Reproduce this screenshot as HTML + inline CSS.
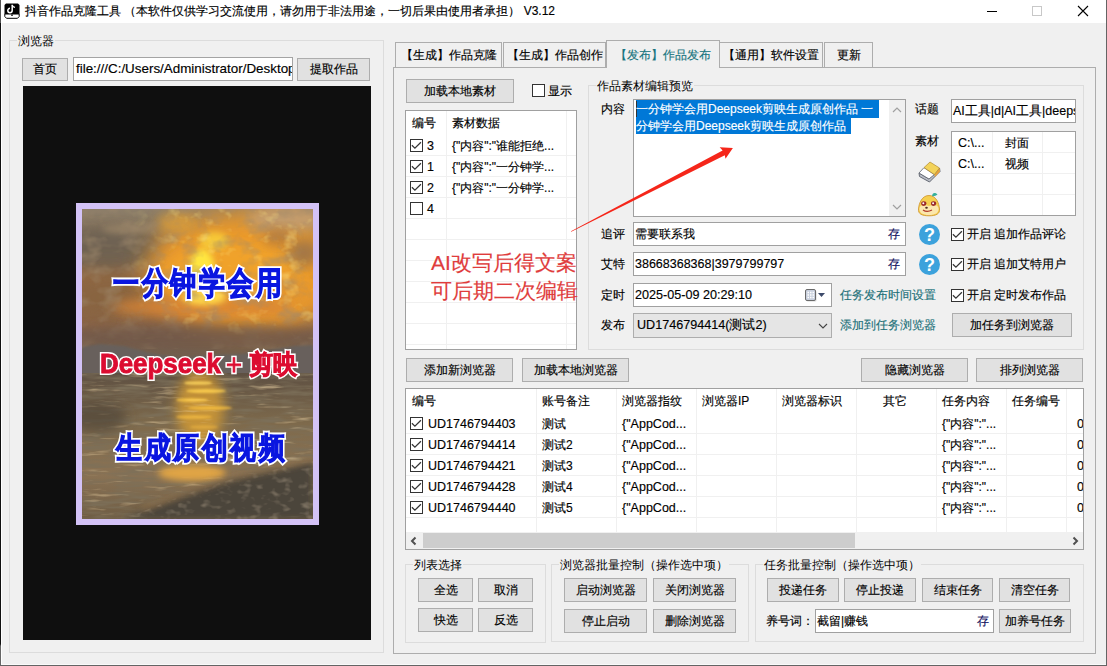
<!DOCTYPE html>
<html><head><meta charset="utf-8">
<style>
*{box-sizing:border-box}
html,body{margin:0;padding:0;width:1107px;height:666px;overflow:hidden;background:#f0f0f0;font-family:"Liberation Sans",sans-serif;font-size:12px;color:#000}
.t,.btn,.tab{-webkit-text-stroke:.15px currentColor}
.a{position:absolute}
.t{position:absolute;white-space:nowrap;line-height:14px}
.btn{position:absolute;background:#e1e1e1;border:1px solid #adadad;text-align:center;white-space:nowrap;line-height:21px;font-size:12px}
.gb{position:absolute;border:1px solid #dcdcdc}
.gbt{position:absolute;background:#f0f0f0;padding:0 1px;white-space:nowrap;line-height:14px;top:-7px}
.inp{position:absolute;background:#fff;border:1px solid #a4a4a4}
.cb{position:absolute;width:13px;height:13px;border:1px solid #333;background:#fff}
.cb svg{position:absolute;left:-1px;top:-1px}
.tab{position:absolute;background:#f0f0f0;border:1px solid #adadad;border-bottom:none;text-align:center;line-height:24px;white-space:nowrap}
.hl{position:absolute;background:#f0f0f0}
.vl{position:absolute;background:#f0f0f0}
.ovw{font-weight:bold;color:#fff;-webkit-text-stroke:4px #fff}
.ovc{font-weight:bold;-webkit-text-stroke:.9px currentColor}
</style></head><body>
<!-- window frame -->
<div class="a" style="left:0;top:0;width:1107px;height:23px;background:#fff"></div>
<div class="a" style="left:1px;top:23px;width:1px;height:642px;background:#fff"></div>
<div class="a" style="left:0;top:664px;width:1107px;height:1px;background:#fafafa"></div>
<div class="a" style="left:0;top:0;width:1px;height:666px;background:linear-gradient(180deg,#555 0,#555 23px,#111 23px,#111 644px,#666 646px)"></div>
<div class="a" style="left:1106px;top:0;width:1px;height:666px;background:#646464"></div>
<div class="a" style="left:0;top:665px;width:1107px;height:1px;background:#646464"></div>
<!-- app icon -->
<svg class="a" style="left:4px;top:3px" width="16" height="16" viewBox="0 0 16 16">
 <path d="M2 0.5H14L15.5 2V11H0.5V2Z" fill="#000"/>
 <path d="M0.8 11H15.2V13.5L13.5 15.3H2.5L0.8 13.5Z" fill="#fff" stroke="#000" stroke-width="1"/>
 <path d="M7.5 13L8 11.5L8.5 13" stroke="#000" stroke-width=".8" fill="none"/>
 <path d="M8.2 1.8V7.5A2.2 2.2 0 1 1 6 5.3" fill="none" stroke="#fff" stroke-width="1.5"/>
 <path d="M8.2 2.2Q9 4 11 4.3" fill="none" stroke="#fff" stroke-width="1.3"/>
</svg>
<div class="t" style="left:25px;top:4px;font-size:12px">抖音作品克隆工具 （本软件仅供学习交流使用，请勿用于非法用途，一切后果由使用者承担） V3.12</div>
<!-- window controls -->
<div class="a" style="left:987px;top:11px;width:10px;height:1px;background:#000"></div>
<div class="a" style="left:1032px;top:6px;width:10px;height:10px;border:1px solid #c8c8c8"></div>
<svg class="a" style="left:1077px;top:5px" width="12" height="12" viewBox="0 0 12 12"><path d="M1 1L11 11M11 1L1 11" stroke="#000" stroke-width="1.1"/></svg>

<!-- left group: browser -->
<div class="gb" style="left:9px;top:40px;width:375px;height:613px"><span class="gbt" style="left:7px">浏览器</span></div>
<div class="btn" style="left:22px;top:58px;width:46px;height:23px">首页</div>
<div class="inp" style="left:73px;top:57px;width:220px;height:24px;overflow:hidden"><span class="t" style="left:2px;top:4px;font-size:13.4px">file:///C:/Users/Administrator/Desktop/index.html</span></div>
<div class="btn" style="left:297px;top:58px;width:73px;height:23px">提取作品</div>
<div class="a" style="left:23px;top:86px;width:348px;height:554px;background:#0f0f0f"></div>
<div class="a" id="photo" style="left:76px;top:203px;width:243px;height:322px;background:#d3c2f6">
 <svg class="a" style="left:6px;top:6px" width="231" height="310" viewBox="0 0 231 310">
  <defs>
   <linearGradient id="sky" x1="0" y1="0" x2="0" y2="1"><stop offset="0" stop-color="#8c7e6a"/><stop offset=".1" stop-color="#85745e"/><stop offset=".35" stop-color="#9a6c44"/><stop offset=".7" stop-color="#8a6448"/><stop offset=".85" stop-color="#74604e"/><stop offset="1" stop-color="#6a5c50"/></linearGradient>
   <linearGradient id="sea" x1="0" y1="0" x2="0" y2="1"><stop offset="0" stop-color="#5e5042"/><stop offset=".35" stop-color="#7e6a4c"/><stop offset=".7" stop-color="#8a7254"/><stop offset="1" stop-color="#6e5c44"/></linearGradient>
   <filter id="b12" x="-50%" y="-50%" width="200%" height="200%"><feGaussianBlur stdDeviation="12"/></filter>
   <filter id="b6" x="-50%" y="-50%" width="200%" height="200%"><feGaussianBlur stdDeviation="6"/></filter>
   <filter id="b3" x="-50%" y="-50%" width="200%" height="200%"><feGaussianBlur stdDeviation="3"/></filter>
   <filter id="b1" x="-50%" y="-50%" width="200%" height="200%"><feGaussianBlur stdDeviation="1.2"/></filter>
   <filter id="ctex" x="0" y="0" width="100%" height="100%"><feTurbulence type="fractalNoise" baseFrequency="0.05 0.07" numOctaves="3" seed="5"/><feColorMatrix type="matrix" values="0 0 0 0 .35  0 0 0 0 .25  0 0 0 0 .15  0 0 0 -2.4 1.3"/></filter>
   <filter id="ctex2" x="0" y="0" width="100%" height="100%"><feTurbulence type="fractalNoise" baseFrequency="0.06 0.08" numOctaves="3" seed="9"/><feColorMatrix type="matrix" values="0 0 0 0 1  0 0 0 0 .82  0 0 0 0 .25  0 0 0 2.6 -1.5"/></filter>
   <filter id="tex" x="0" y="0" width="100%" height="100%"><feTurbulence type="fractalNoise" baseFrequency="0.03 0.22" numOctaves="3" seed="7"/><feColorMatrix type="matrix" values="0 0 0 0 .2  0 0 0 0 .16  0 0 0 0 .1  0 0 0 -2.2 1.35"/></filter>
   <filter id="tex2" x="0" y="0" width="100%" height="100%"><feTurbulence type="fractalNoise" baseFrequency="0.03 0.25" numOctaves="3" seed="3"/><feColorMatrix type="matrix" values="0 0 0 0 .8  0 0 0 0 .62  0 0 0 0 .36  0 0 0 2 -1.2"/></filter>
   <filter id="foam" x="0" y="0" width="100%" height="100%"><feTurbulence type="fractalNoise" baseFrequency="0.1 0.16" numOctaves="2" seed="11"/><feColorMatrix type="matrix" values="0 0 0 0 .62  0 0 0 0 .5  0 0 0 0 .36  0 0 0 1.8 -.95"/></filter>
   <linearGradient id="mg" x1="0" y1="0" x2="1" y2="0"><stop offset=".15" stop-color="#000"/><stop offset=".45" stop-color="#fff"/></linearGradient><mask id="m2"><rect x="0" y="0" width="231" height="140" fill="url(#mg)"/></mask>
   <clipPath id="fc"><path d="M40 310C70 300 100 285 130 276C160 266 190 262 231 252V310Z"/></clipPath>
  </defs>
  <rect x="0" y="0" width="231" height="166" fill="url(#sky)"/>
  <ellipse cx="25" cy="40" rx="58" ry="22" fill="#6a6052" opacity=".85" filter="url(#b6)"/><ellipse cx="28" cy="88" rx="50" ry="25" fill="#86643f" opacity=".8" filter="url(#b12)"/>
  <ellipse cx="165" cy="62" rx="100" ry="60" fill="#eb9a2a" filter="url(#b12)"/>
  <ellipse cx="150" cy="70" rx="70" ry="35" fill="#f0a22a" filter="url(#b6)"/>
  <ellipse cx="48" cy="20" rx="28" ry="5" fill="#a08a6c" opacity=".7" filter="url(#b3)"/>
  <ellipse cx="205" cy="10" rx="40" ry="12" fill="#c49c6c" filter="url(#b6)"/>
  <ellipse cx="95" cy="14" rx="20" ry="10" fill="#e0a038" opacity=".8" filter="url(#b6)"/>
  <ellipse cx="132" cy="32" rx="15" ry="9" fill="#f6c838" filter="url(#b3)"/>
  <ellipse cx="120" cy="58" rx="12" ry="18" fill="#ffe640" filter="url(#b3)"/>
  <ellipse cx="196" cy="28" rx="15" ry="8" fill="#a87440" opacity=".8" filter="url(#b6)"/>
  <ellipse cx="222" cy="44" rx="16" ry="14" fill="#94704c" opacity=".8" filter="url(#b6)"/>
  <ellipse cx="200" cy="88" rx="30" ry="22" fill="#e4962e" filter="url(#b6)"/>
  <ellipse cx="120" cy="98" rx="90" ry="11" fill="#d88434" opacity=".85" filter="url(#b6)"/>
  <ellipse cx="122" cy="88" rx="22" ry="8" fill="#ffd84a" filter="url(#b3)"/>
  <rect x="0" y="0" width="231" height="140" filter="url(#ctex)" opacity=".6"/>
  <g mask="url(#m2)"><rect x="0" y="0" width="231" height="130" filter="url(#ctex2)" opacity=".55"/></g>
  <ellipse cx="115" cy="128" rx="140" ry="12" fill="#6e5648" opacity=".75" filter="url(#b6)"/>
  <path d="M0 138L18 135L42 137L68 144L98 149L128 146L160 145L188 141L214 137L231 136V166H0Z" fill="#67615b" filter="url(#b1)"/>
  <rect x="0" y="164" width="231" height="146" fill="url(#sea)"/>
  <rect x="0" y="164" width="231" height="146" filter="url(#tex)"/>
  <ellipse cx="118" cy="198" rx="24" ry="38" fill="#dca030" opacity=".75" filter="url(#b6)"/>
  <rect x="0" y="164" width="231" height="146" filter="url(#tex2)" opacity=".9"/>
  <ellipse cx="116" cy="174" rx="14" ry="1.6" fill="#ffd860" opacity=".9" filter="url(#b1)"/>
  <ellipse cx="124" cy="182" rx="20" ry="2" fill="#ffd050" opacity=".85" filter="url(#b1)"/>
  <ellipse cx="110" cy="191" rx="16" ry="1.8" fill="#ffcc48" opacity=".85" filter="url(#b1)"/>
  <ellipse cx="128" cy="199" rx="22" ry="2" fill="#f8c040" opacity=".8" filter="url(#b1)"/>
  <ellipse cx="112" cy="208" rx="18" ry="2" fill="#f0b840" opacity=".8" filter="url(#b1)"/>
  <ellipse cx="122" cy="218" rx="14" ry="1.8" fill="#e8b040" opacity=".7" filter="url(#b1)"/>
  <ellipse cx="15" cy="208" rx="30" ry="16" fill="#4a4034" opacity=".6" filter="url(#b6)"/>
  <ellipse cx="110" cy="264" rx="34" ry="8" fill="#e0a444" filter="url(#b3)"/>
  <path d="M40 310C70 300 100 285 130 276C160 266 190 262 231 252V310Z" fill="#4c443a" filter="url(#b3)"/>
  <g clip-path="url(#fc)"><rect x="0" y="240" width="231" height="70" filter="url(#foam)" opacity=".55"/></g>
  <path d="M60 300C90 290 110 282 140 272C170 264 200 258 231 250" fill="none" stroke="#a88050" stroke-width="4" opacity=".5" filter="url(#b3)"/>
 </svg>
 <div class="t ovw" style="left:37px;top:62px;font-size:26px;letter-spacing:2.6px;line-height:36px;transform:scale(1,1.23);transform-origin:0 50%">一分钟学会用</div>
 <div class="t ovc" style="left:37px;top:62px;font-size:26px;letter-spacing:2.6px;line-height:36px;color:#0a16e0;transform:scale(1,1.23);transform-origin:0 50%">一分钟学会用</div>
 <div class="t ovw" style="left:24px;top:143px;font-size:28px;line-height:36px;transform:scale(.925,1.0);transform-origin:0 50%">Deepseek<span style="font-weight:normal">＋</span><span style="font-size:26px;margin-left:2px">剪映</span></div>
 <div class="t ovc" style="left:24px;top:143px;font-size:28px;line-height:36px;color:#dc0c30;transform:scale(.925,1.0);transform-origin:0 50%">Deepseek<span style="font-weight:normal">＋</span><span style="font-size:26px;margin-left:2px">剪映</span></div>
 <div class="t ovw" style="left:40px;top:227px;font-size:26px;letter-spacing:2.6px;line-height:36px;transform:scale(1,1.16);transform-origin:0 50%">生成原创视频</div>
 <div class="t ovc" style="left:40px;top:227px;font-size:26px;letter-spacing:2.6px;line-height:36px;color:#0a16e0;transform:scale(1,1.16);transform-origin:0 50%">生成原创视频</div>
</div>

<!-- tabs -->
<div class="a" style="left:393px;top:67px;width:703px;height:587px;border:1px solid #adadad"></div>
<div class="tab" style="left:395px;top:42px;width:107px;height:25px">【生成】作品克隆</div>
<div class="tab" style="left:503px;top:42px;width:103px;height:25px">【生成】作品创作</div>
<div class="tab" style="left:719px;top:42px;width:104px;height:25px">【通用】软件设置</div>
<div class="tab" style="left:824px;top:42px;width:49px;height:25px">更新</div>
<div class="tab" style="left:606px;top:40px;width:114px;height:28px;color:#187580;line-height:28px">【发布】作品发布</div>

<!-- tab panel content -->
<div class="btn" style="left:406px;top:79px;width:108px;height:24px;line-height:22px">加载本地素材</div>
<div class="cb" style="left:532px;top:84px"></div>
<div class="t" style="left:548px;top:84px">显示</div>

<!-- material list -->
<div class="a" style="left:405px;top:110px;width:172px;height:240px;background:#fff;border:1px solid #a0a0a0;overflow:hidden">
 <div class="a" style="left:40px;top:0;width:1px;height:240px;background:#f0f0f0"></div>
 <div class="a" style="left:160px;top:0;width:1px;height:240px;background:#f0f0f0"></div>
 <div class="a" style="left:0;top:44px;width:172px;height:1px;background:#f0f0f0"></div>
 <div class="a" style="left:0;top:65px;width:172px;height:1px;background:#f0f0f0"></div>
 <div class="a" style="left:0;top:86px;width:172px;height:1px;background:#f0f0f0"></div>
 <div class="a" style="left:0;top:107px;width:172px;height:1px;background:#f0f0f0"></div>
 <div class="a" style="left:0;top:128px;width:172px;height:1px;background:#f0f0f0"></div>
 <div class="a" style="left:0;top:149px;width:172px;height:1px;background:#f0f0f0"></div>
 <div class="a" style="left:0;top:170px;width:172px;height:1px;background:#f0f0f0"></div>
 <div class="a" style="left:0;top:191px;width:172px;height:1px;background:#f0f0f0"></div>
 <div class="a" style="left:0;top:212px;width:172px;height:1px;background:#f0f0f0"></div>
 <div class="a" style="left:0;top:233px;width:172px;height:1px;background:#f0f0f0"></div>
 <div class="a" style="left:0;top:0;width:172px;height:24px;background:#fff"></div>
 <div class="a" style="left:40px;top:0;width:1px;height:24px;background:#f0f0f0"></div>
 <div class="a" style="left:160px;top:0;width:1px;height:24px;background:#f0f0f0"></div>
 <div class="t" style="left:6px;top:5px">编号</div>
 <div class="t" style="left:46px;top:5px">素材数据</div>
 <div class="cb on" style="left:4px;top:28px"><svg width="13" height="13" viewBox="0 0 13 13"><path d="M1.9 6.3L4.9 9.2L10.9 3.2" stroke="#333" stroke-width="1.25" fill="none"/></svg></div><div class="t" style="left:21px;top:28px;font-size:12.5px">3</div><div class="t" style="left:46px;top:28px">{"内容":"谁能拒绝...</div>
 <div class="cb on" style="left:4px;top:49px"><svg width="13" height="13" viewBox="0 0 13 13"><path d="M1.9 6.3L4.9 9.2L10.9 3.2" stroke="#333" stroke-width="1.25" fill="none"/></svg></div><div class="t" style="left:21px;top:49px;font-size:12.5px">1</div><div class="t" style="left:46px;top:49px">{"内容":"一分钟学...</div>
 <div class="cb on" style="left:4px;top:70px"><svg width="13" height="13" viewBox="0 0 13 13"><path d="M1.9 6.3L4.9 9.2L10.9 3.2" stroke="#333" stroke-width="1.25" fill="none"/></svg></div><div class="t" style="left:21px;top:70px;font-size:12.5px">2</div><div class="t" style="left:46px;top:70px">{"内容":"一分钟学...</div>
 <div class="cb" style="left:4px;top:91px"></div><div class="t" style="left:21px;top:91px;font-size:12.5px">4</div>
</div>

<!-- edit preview group -->
<div class="gb" style="left:588px;top:85px;width:496px;height:265px"><span class="gbt" style="left:7px">作品素材编辑预览</span></div>
<div class="t" style="left:601px;top:102px">内容</div>
<div class="inp" style="left:633px;top:99px;width:273px;height:118px;border-color:#a0a0a0">
 <div class="a" style="left:255px;top:0;width:16px;height:116px;background:#f0f0f0"></div>
 <svg class="a" style="left:258px;top:6px" width="10" height="7" viewBox="0 0 10 7"><path d="M1 6L5 2L9 6" fill="none" stroke="#a0a0a0" stroke-width="1.2"/></svg>
 <svg class="a" style="left:258px;top:104px" width="10" height="7" viewBox="0 0 10 7"><path d="M1 1L5 5L9 1" fill="none" stroke="#a0a0a0" stroke-width="1.2"/></svg>
 <div class="a" style="left:2px;top:0px;width:243px;height:18px;background:#0078d7"></div>
 <div class="a" style="left:2px;top:18px;width:215px;height:16px;background:#0078d7"></div>
 <div class="a" style="left:2px;top:1px;width:1px;height:16px;background:#333"></div>
 <div class="t" style="left:2px;top:1px;color:#fff;line-height:16px">一分钟学会用Deepseek剪映生成原创作品 一</div>
 <div class="t" style="left:2px;top:18px;color:#fff;line-height:16px">分钟学会用Deepseek剪映生成原创作品</div>
</div>
<div class="t" style="left:915px;top:102px">话题</div>
<div class="inp" style="left:951px;top:99px;width:125px;height:24px;border-color:#a0a0a0;overflow:hidden"><span class="t" style="left:1px;top:4px;font-size:12.5px">AI工具|d|AI工具|deepseek</span></div>
<div class="t" style="left:915px;top:134px">素材</div>
<div class="inp" style="left:951px;top:131px;width:125px;height:85px;border-color:#a0a0a0;overflow:hidden">
 <div class="a" style="left:40px;top:0;width:1px;height:85px;background:#f0f0f0"></div>
 <div class="a" style="left:90px;top:0;width:1px;height:85px;background:#f0f0f0"></div>
 <div class="a" style="left:0;top:20px;width:125px;height:1px;background:#f0f0f0"></div>
 <div class="a" style="left:0;top:41px;width:125px;height:1px;background:#f0f0f0"></div>
 <div class="a" style="left:0;top:62px;width:125px;height:1px;background:#f0f0f0"></div>
 <div class="t" style="left:6px;top:4px;font-size:12.5px">C:\...</div><div class="t" style="left:53px;top:4px">封面</div>
 <div class="t" style="left:6px;top:25px;font-size:12.5px">C:\...</div><div class="t" style="left:53px;top:25px">视频</div>
</div>
<!-- eraser -->
<svg class="a" style="left:912px;top:156px" width="34" height="62" viewBox="912 156 34 62">
 <path d="M919 173L929 179L939.5 168L940 171.5L929.5 182L919.5 176.5Z" fill="#b9bdc6" stroke="#5a5f6a" stroke-width=".9" stroke-linejoin="round"/>
 <path d="M934.4 174.6L939.5 168L940 171.5L935 177Z" fill="#e8a23c"/>
 <path d="M924 167.6L934.4 174.6L929 179L919 173Z" fill="#fff" stroke="#5a5f6a" stroke-width=".8" stroke-linejoin="round"/>
 <path d="M930 162L939.5 168L934.4 174.6L924 167.6Z" fill="#f3d35a" stroke="#b08a30" stroke-width=".7" stroke-linejoin="round"/>
 <!-- mascot -->
 <path d="M929 195.5C922 195.5 919 203 918.5 209C918 214 922 215.8 929 215.8C936 215.8 940 214 939.5 209C939 203 936 195.5 929 195.5Z" fill="#f5cf4f" stroke="#d39a35" stroke-width=".9"/>
 <path d="M919.5 208C921 204 925 205 929 206C933 205 937 204 938.5 208C939 213 935 215 929 215C923 215 919 213 919.5 208Z" fill="#fbe7ae"/>
 <path d="M932 196C932.5 193 934.5 192 937.5 194.5C935.5 196 934 196.5 932 196Z" fill="#35b09a"/>
 <ellipse cx="923.8" cy="203.6" rx="2.6" ry="2.3" fill="#9a2a2a"/>
 <ellipse cx="933.6" cy="203.6" rx="2.6" ry="2.3" fill="#9a2a2a"/>
 <circle cx="923.3" cy="203.3" r="1" fill="#fff"/>
 <circle cx="933.1" cy="203.3" r="1" fill="#fff"/>
 <ellipse cx="926.5" cy="207.8" rx="1.3" ry="1" fill="#4a2a20"/>
 <path d="M923 210Q927 212.8 932 210" fill="none" stroke="#b03a2a" stroke-width="1.1"/>
</svg>

<!-- form rows -->
<div class="t" style="left:601px;top:227px">追评</div>
<div class="inp" style="left:633px;top:222px;width:273px;height:24px;border-color:#a0a0a0"><span class="t" style="left:1px;top:4px">需要联系我</span><span class="t" style="left:254px;top:4px;color:#12125e">存</span></div>
<div class="t" style="left:601px;top:257px">艾特</div>
<div class="inp" style="left:633px;top:252px;width:273px;height:24px;border-color:#a0a0a0"><span class="t" style="left:1px;top:4px;font-size:12.5px">38668368368|3979799797</span><span class="t" style="left:254px;top:4px;color:#12125e">存</span></div>
<div class="t" style="left:601px;top:288px">定时</div>
<div class="inp" style="left:633px;top:283px;width:199px;height:24px;border-color:#a0a0a0"><span class="t" style="left:1px;top:4px;font-size:12.6px">2025-05-09 20:29:10</span>
 <svg class="a" style="left:170px;top:4px" width="24" height="15" viewBox="0 0 24 15"><rect x="2.5" y="2.5" width="10" height="11" rx="1.5" fill="#bbb" opacity=".6"/><rect x="1.5" y="1.5" width="10" height="11" rx="1.5" fill="#c9d0de" stroke="#6a6a6a" stroke-width="1"/><path d="M3.5 4.5h1.5M6 4.5h1.5M8.5 4.5h1.5M3.5 7h1.5M6 7h1.5M8.5 7h1.5M3.5 9.5h1.5M6 9.5h1.5M8.5 9.5h1.5" stroke="#fff" stroke-width="1.4"/><path d="M14 5H21L17.5 9Z" fill="#3c4a6a"/></svg>
</div>
<div class="t" style="left:601px;top:318px">发布</div>
<div class="inp" style="left:633px;top:313px;width:199px;height:25px;background:#e5e5e5;border-color:#adadad"><span class="t" style="left:3px;top:4px;font-size:12.6px">UD1746794414(测试2)</span>
 <svg class="a" style="left:184px;top:9px" width="10" height="7" viewBox="0 0 10 7"><path d="M1 1L5 5L9 1" fill="none" stroke="#444" stroke-width="1.1"/></svg>
</div>
<div class="t" style="left:840px;top:288px;color:#1b7079">任务发布时间设置</div>
<div class="t" style="left:840px;top:318px;color:#1b7079">添加到任务浏览器</div>
<!-- help icons -->
<div class="a" style="left:919px;top:224px;width:21px;height:21px;border-radius:50%;background:#3ca2dc;color:#fff;font-weight:bold;font-size:18px;line-height:22px;text-align:center">?</div>
<div class="a" style="left:919px;top:254px;width:21px;height:21px;border-radius:50%;background:#3ca2dc;color:#fff;font-weight:bold;font-size:18px;line-height:22px;text-align:center">?</div>
<div class="cb on" style="left:951px;top:228px"><svg width="13" height="13" viewBox="0 0 13 13"><path d="M1.9 6.3L4.9 9.2L10.9 3.2" stroke="#333" stroke-width="1.25" fill="none"/></svg></div><div class="t" style="left:967px;top:227px">开启 追加作品评论</div>
<div class="cb on" style="left:951px;top:258px"><svg width="13" height="13" viewBox="0 0 13 13"><path d="M1.9 6.3L4.9 9.2L10.9 3.2" stroke="#333" stroke-width="1.25" fill="none"/></svg></div><div class="t" style="left:967px;top:257px">开启 追加艾特用户</div>
<div class="cb on" style="left:951px;top:289px"><svg width="13" height="13" viewBox="0 0 13 13"><path d="M1.9 6.3L4.9 9.2L10.9 3.2" stroke="#333" stroke-width="1.25" fill="none"/></svg></div><div class="t" style="left:967px;top:288px">开启 定时发布作品</div>
<div class="btn" style="left:952px;top:313px;width:120px;height:24px;line-height:22px">加任务到浏览器</div>

<!-- red annotation -->
<div class="t" style="left:431px;top:249px;font-size:21px;line-height:28px;color:#e03c3c">AI改写后得文案<br>可后期二次编辑</div>
<svg class="a" style="left:560px;top:140px" width="190" height="100" viewBox="560 140 190 100">
 <path d="M571 231.2L722.6 150.6L719.7 147.2L732.9 148.1L725.5 158.7L724.8 155.2L571.3 231.8Z" fill="#f5261a"/>
</svg>

<!-- browser buttons -->
<div class="btn" style="left:406px;top:358px;width:107px;height:24px;line-height:22px">添加新浏览器</div>
<div class="btn" style="left:522px;top:358px;width:107px;height:24px;line-height:22px">加载本地浏览器</div>
<div class="btn" style="left:861px;top:358px;width:107px;height:24px;line-height:22px">隐藏浏览器</div>
<div class="btn" style="left:976px;top:358px;width:107px;height:24px;line-height:22px">排列浏览器</div>

<!-- browser table -->
<div class="a" id="tbl" style="left:405px;top:388px;width:679px;height:162px;background:#fff;border:1px solid #a0a0a0;overflow:hidden">
 <div class="a" style="left:130px;top:0;width:1px;height:143px;background:#f0f0f0"></div>
 <div class="a" style="left:210px;top:0;width:1px;height:143px;background:#f0f0f0"></div>
 <div class="a" style="left:290px;top:0;width:1px;height:143px;background:#f0f0f0"></div>
 <div class="a" style="left:370px;top:0;width:1px;height:143px;background:#f0f0f0"></div>
 <div class="a" style="left:450px;top:0;width:1px;height:143px;background:#f0f0f0"></div>
 <div class="a" style="left:530px;top:0;width:1px;height:143px;background:#f0f0f0"></div>
 <div class="a" style="left:600px;top:0;width:1px;height:143px;background:#f0f0f0"></div>
 <div class="a" style="left:660px;top:0;width:1px;height:143px;background:#f0f0f0"></div>
 <div class="a" style="left:0;top:44px;width:677px;height:1px;background:#f0f0f0"></div>
 <div class="a" style="left:0;top:65px;width:677px;height:1px;background:#f0f0f0"></div>
 <div class="a" style="left:0;top:86px;width:677px;height:1px;background:#f0f0f0"></div>
 <div class="a" style="left:0;top:107px;width:677px;height:1px;background:#f0f0f0"></div>
 <div class="a" style="left:0;top:128px;width:677px;height:1px;background:#f0f0f0"></div>
 <div class="a" style="left:0;top:149px;width:677px;height:1px;background:#f0f0f0"></div>
 <div class="a" style="left:0;top:0;width:677px;height:24px;background:#fff"></div>
 <div class="a" style="left:130px;top:0;width:1px;height:24px;background:#f0f0f0"></div>
 <div class="a" style="left:210px;top:0;width:1px;height:24px;background:#f0f0f0"></div>
 <div class="a" style="left:290px;top:0;width:1px;height:24px;background:#f0f0f0"></div>
 <div class="a" style="left:370px;top:0;width:1px;height:24px;background:#f0f0f0"></div>
 <div class="a" style="left:450px;top:0;width:1px;height:24px;background:#f0f0f0"></div>
 <div class="a" style="left:530px;top:0;width:1px;height:24px;background:#f0f0f0"></div>
 <div class="a" style="left:600px;top:0;width:1px;height:24px;background:#f0f0f0"></div>
 <div class="a" style="left:660px;top:0;width:1px;height:24px;background:#f0f0f0"></div>
 <div class="t" style="left:6px;top:5px">编号</div>
 <div class="t" style="left:136px;top:5px">账号备注</div>
 <div class="t" style="left:216px;top:5px">浏览器指纹</div>
 <div class="t" style="left:296px;top:5px">浏览器IP</div>
 <div class="t" style="left:376px;top:5px">浏览器标识</div>
 <div class="t" style="left:477px;top:5px">其它</div>
 <div class="t" style="left:536px;top:5px">任务内容</div>
 <div class="t" style="left:606px;top:5px">任务编号</div>
 <div class="cb on" style="left:4px;top:28px"><svg width="13" height="13" viewBox="0 0 13 13"><path d="M1.9 6.3L4.9 9.2L10.9 3.2" stroke="#333" stroke-width="1.25" fill="none"/></svg></div>
 <div class="t" style="left:22px;top:28px;font-size:12.5px">UD1746794403</div>
 <div class="t" style="left:136px;top:28px">测试</div>
 <div class="t" style="left:216px;top:28px;font-size:12.5px">{"AppCod...</div>
 <div class="t" style="left:536px;top:28px">{"内容":"...</div>
 <div class="t" style="left:671px;top:28px;font-size:12.5px">0</div>
 <div class="cb on" style="left:4px;top:49px"><svg width="13" height="13" viewBox="0 0 13 13"><path d="M1.9 6.3L4.9 9.2L10.9 3.2" stroke="#333" stroke-width="1.25" fill="none"/></svg></div>
 <div class="t" style="left:22px;top:49px;font-size:12.5px">UD1746794414</div>
 <div class="t" style="left:136px;top:49px">测试2</div>
 <div class="t" style="left:216px;top:49px;font-size:12.5px">{"AppCod...</div>
 <div class="t" style="left:536px;top:49px">{"内容":"...</div>
 <div class="t" style="left:671px;top:49px;font-size:12.5px">0</div>
 <div class="cb on" style="left:4px;top:70px"><svg width="13" height="13" viewBox="0 0 13 13"><path d="M1.9 6.3L4.9 9.2L10.9 3.2" stroke="#333" stroke-width="1.25" fill="none"/></svg></div>
 <div class="t" style="left:22px;top:70px;font-size:12.5px">UD1746794421</div>
 <div class="t" style="left:136px;top:70px">测试3</div>
 <div class="t" style="left:216px;top:70px;font-size:12.5px">{"AppCod...</div>
 <div class="t" style="left:536px;top:70px">{"内容":"...</div>
 <div class="t" style="left:671px;top:70px;font-size:12.5px">0</div>
 <div class="cb on" style="left:4px;top:91px"><svg width="13" height="13" viewBox="0 0 13 13"><path d="M1.9 6.3L4.9 9.2L10.9 3.2" stroke="#333" stroke-width="1.25" fill="none"/></svg></div>
 <div class="t" style="left:22px;top:91px;font-size:12.5px">UD1746794428</div>
 <div class="t" style="left:136px;top:91px">测试4</div>
 <div class="t" style="left:216px;top:91px;font-size:12.5px">{"AppCod...</div>
 <div class="t" style="left:536px;top:91px">{"内容":"...</div>
 <div class="t" style="left:671px;top:91px;font-size:12.5px">0</div>
 <div class="cb on" style="left:4px;top:112px"><svg width="13" height="13" viewBox="0 0 13 13"><path d="M1.9 6.3L4.9 9.2L10.9 3.2" stroke="#333" stroke-width="1.25" fill="none"/></svg></div>
 <div class="t" style="left:22px;top:112px;font-size:12.5px">UD1746794440</div>
 <div class="t" style="left:136px;top:112px">测试5</div>
 <div class="t" style="left:216px;top:112px;font-size:12.5px">{"AppCod...</div>
 <div class="t" style="left:536px;top:112px">{"内容":"...</div>
 <div class="t" style="left:671px;top:112px;font-size:12.5px">0</div>
 <div class="a" style="left:0;top:143px;width:677px;height:17px;background:#f0f0f0"></div>
 <div class="a" style="left:17px;top:144px;width:432px;height:15px;background:#cdcdcd"></div>
 <svg class="a" style="left:4px;top:147px" width="7" height="10" viewBox="0 0 7 10"><path d="M5.5 1.5L2 5L5.5 8.5" fill="none" stroke="#505050" stroke-width="2"/></svg>
 <svg class="a" style="left:666px;top:147px" width="7" height="10" viewBox="0 0 7 10"><path d="M1.5 1.5L5 5L1.5 8.5" fill="none" stroke="#505050" stroke-width="2"/></svg>
</div>

<!-- bottom groups -->
<div class="gb" style="left:405px;top:564px;width:141px;height:79px"><span class="gbt" style="left:7px">列表选择</span></div>
<div class="btn" style="left:418px;top:578px;width:55px;height:24px;line-height:22px">全选</div>
<div class="btn" style="left:478px;top:578px;width:55px;height:24px;line-height:22px">取消</div>
<div class="btn" style="left:418px;top:608px;width:55px;height:24px;line-height:22px">快选</div>
<div class="btn" style="left:478px;top:608px;width:55px;height:24px;line-height:22px">反选</div>

<div class="gb" style="left:551px;top:564px;width:198px;height:78px"><span class="gbt" style="left:7px">浏览器批量控制（操作选中项）</span></div>
<div class="btn" style="left:564px;top:578px;width:83px;height:24px;line-height:22px">启动浏览器</div>
<div class="btn" style="left:653px;top:578px;width:83px;height:24px;line-height:22px">关闭浏览器</div>
<div class="btn" style="left:564px;top:609px;width:83px;height:24px;line-height:22px">停止启动</div>
<div class="btn" style="left:653px;top:609px;width:83px;height:24px;line-height:22px">删除浏览器</div>

<div class="gb" style="left:755px;top:564px;width:329px;height:78px"><span class="gbt" style="left:7px">任务批量控制（操作选中项）</span></div>
<div class="btn" style="left:767px;top:578px;width:72px;height:24px;line-height:22px">投递任务</div>
<div class="btn" style="left:844px;top:578px;width:72px;height:24px;line-height:22px">停止投递</div>
<div class="btn" style="left:922px;top:578px;width:71px;height:24px;line-height:22px">结束任务</div>
<div class="btn" style="left:999px;top:578px;width:71px;height:24px;line-height:22px">清空任务</div>
<div class="t" style="left:766px;top:614px">养号词：</div>
<div class="inp" style="left:815px;top:609px;width:179px;height:24px;border-color:#a0a0a0"><span class="t" style="left:1px;top:4px">截留|赚钱</span><span class="t" style="left:161px;top:4px;color:#12125e">存</span></div>
<div class="btn" style="left:999px;top:609px;width:72px;height:24px;line-height:22px">加养号任务</div>

</body></html>
